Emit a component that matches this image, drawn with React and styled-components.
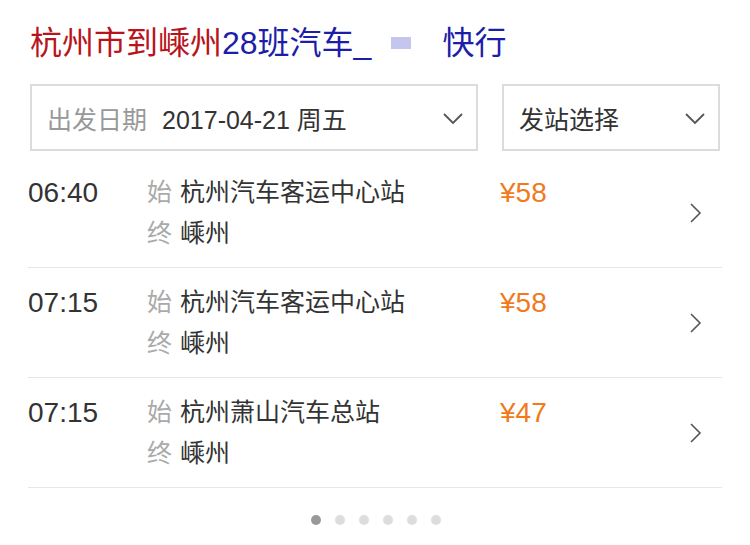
import React from "react";
import styled, { createGlobalStyle } from "styled-components";

const GlobalStyle = createGlobalStyle`
  body {
    margin: 0;
    background: #fff;
    font-family: "Liberation Sans", "Noto Sans CJK SC", sans-serif;
    color: #333;
  }
`;

const Page = styled.div`
  width: 750px;
  box-sizing: border-box;
  padding: 21px 28px 0 28px;
`;

const Title = styled.h1`
  margin: 0 0 19px 2px;
  font-size: 32px;
  font-weight: normal;
  line-height: 44px;
  white-space: nowrap;
  display: flex;
  align-items: center;
`;

const Red = styled.span`
  color: #b8141b;
`;

const Blue = styled.span`
  color: #1d1ea8;
`;

const Censor = styled.span`
  display: inline-block;
  width: 71px;
  height: 44px;
  position: relative;
  &::after {
    content: "";
    position: absolute;
    left: 20px;
    top: 16px;
    width: 20px;
    height: 12px;
    background: #c4c6f0;
  }
`;

const Filters = styled.div`
  display: flex;
  gap: 24px;
  padding: 0 2px;
  margin-bottom: 7px;
`;

const Select = styled.div`
  box-sizing: border-box;
  height: 67px;
  width: ${(p) => p.w}px;
  border: 2px solid #dcdcdc;
  display: flex;
  align-items: center;
  padding: 0 12px 0 15px;
  font-size: 25px;
`;

const Label = styled.span`
  color: #999;
  margin-right: 15px;
`;

const Value = styled.span`
  color: #333;
  flex: 1;
`;

const Chevron = ({ dir = "down", size = 22 }) =>
  dir === "down" ? (
    <svg width={size} height={size} viewBox="0 0 22 22" fill="none">
      <path d="M2 7 L11 16 L20 7" stroke="#555" strokeWidth="1.8" />
    </svg>
  ) : (
    <svg width="14" height="22" viewBox="0 0 14 22" fill="none">
      <path d="M2 2 L11 11 L2 20" stroke="#555" strokeWidth="1.6" />
    </svg>
  );

const Row = styled.div`
  display: flex;
  align-items: flex-start;
  padding: 14px 19px 13px 0;
  border-bottom: 1px solid #e6e6e6;
  height: 82px;
  box-sizing: content-box;
`;

const Time = styled.div`
  width: 119px;
  font-size: 28px;
  line-height: 41px;
  color: #333;
`;

const Stations = styled.div`
  width: 353px;
  font-size: 25px;
  line-height: 41px;
`;

const Tag = styled.span`
  color: #aaa;
  margin-right: 8px;
`;

const Price = styled.div`
  flex: 1;
  font-size: 28px;
  line-height: 41px;
  color: #f07a1c;
`;

const Arrow = styled.div`
  align-self: center;
  display: flex;
`;

const Dots = styled.div`
  display: flex;
  justify-content: center;
  gap: 14px;
  margin-top: 27px;
  padding-left: 2px;
`;

const Dot = styled.span`
  width: 10px;
  height: 10px;
  border-radius: 50%;
  background: ${(p) => (p.active ? "#999" : "#ddd")};
`;

const trips = [
  { time: "06:40", from: "杭州汽车客运中心站", to: "嵊州", price: "¥58" },
  { time: "07:15", from: "杭州汽车客运中心站", to: "嵊州", price: "¥58" },
  { time: "07:15", from: "杭州萧山汽车总站", to: "嵊州", price: "¥47" },
];

export default function App() {
  return (
    <>
      <GlobalStyle />
      <Page>
        <Title>
          <Red>杭州市到嵊州</Red>
          <Blue>28班汽车_</Blue>
          <Censor />
          <Blue>快行</Blue>
        </Title>
        <Filters>
          <Select w={448}>
            <Label>出发日期</Label>
            <Value>2017-04-21 周五</Value>
            <Chevron />
          </Select>
          <Select w={218}>
            <Value>发站选择</Value>
            <Chevron />
          </Select>
        </Filters>
        {trips.map((t, i) => (
          <Row key={i}>
            <Time>{t.time}</Time>
            <Stations>
              <div>
                <Tag>始</Tag>
                {t.from}
              </div>
              <div>
                <Tag>终</Tag>
                {t.to}
              </div>
            </Stations>
            <Price>{t.price}</Price>
            <Arrow>
              <Chevron dir="right" />
            </Arrow>
          </Row>
        ))}
        <Dots>
          {[0, 1, 2, 3, 4, 5].map((i) => (
            <Dot key={i} active={i === 0} />
          ))}
        </Dots>
      </Page>
    </>
  );
}
